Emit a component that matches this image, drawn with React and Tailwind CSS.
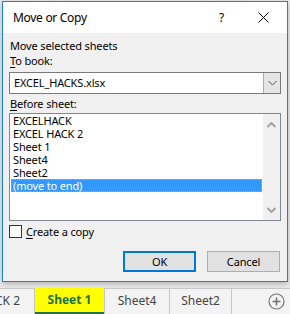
import React from "react";

function Chevron({ up, color = "#333", sw = 1 }) {
  return (
    <svg width="9" height="6" viewBox="0 0 9 6">
      {up ? (
        <polyline points="0.5,5 4.5,1 8.5,5" fill="none" stroke={color} strokeWidth={sw} />
      ) : (
        <polyline points="0.5,1 4.5,5 8.5,1" fill="none" stroke={color} strokeWidth={sw} />
      )}
    </svg>
  );
}

export default function App() {
  const items = ["EXCELHACK", "EXCEL HACK 2", "Sheet 1", "Sheet4", "Sheet2"];
  return (
    <div className="w-[290px] h-[314px] bg-[#ececec] overflow-hidden flex flex-col text-black font-['Noto_Sans','Open_Sans',sans-serif]">
      {/* Dialog */}
      <div className="ml-[2px] mt-[1px] w-[286px] h-[281px] border border-[#1883d7] bg-[#f0f0f0] flex flex-col text-[11px] tracking-[-0.15px] shadow-[0_2px_6px_rgba(0,0,0,0.25)]">
        <div className="h-[31px] bg-white flex items-center pl-[10px] pr-[18px] shrink-0">
          <span className="text-[12px] tracking-[-0.3px] leading-none">Move or Copy</span>
          <span className="ml-auto mr-[34px] text-[12px] leading-none">?</span>
          <svg width="11" height="11" viewBox="0 0 11 11">
            <line x1="0.5" y1="0.5" x2="10.5" y2="10.5" stroke="#000" strokeWidth="1" />
            <line x1="10.5" y1="0.5" x2="0.5" y2="10.5" stroke="#000" strokeWidth="1" />
          </svg>
        </div>
        <div className="flex flex-col pl-[6px] pr-[6px]">
          <div className="mt-[6px] h-[14px] leading-[14px] pl-[1px]">Move selected sheets</div>
          <div className="h-[15px] leading-[15px] pl-[1px]">
            <span className="underline underline-offset-2">T</span>o book:
          </div>
          <div className="mt-[4px] h-[22px] flex border border-[#7a7a7a] bg-white">
            <div className="flex-1 flex items-center pl-[4px]">EXCEL_HACKS.xlsx</div>
            <div className="w-[17px] bg-[#e5e5e5] border-l border-[#acacac] flex items-center justify-center">
              <Chevron color="#555" />
            </div>
          </div>
          <div className="mt-[3px] h-[14px] leading-[14px] pl-[1px]">
            <span className="underline underline-offset-2">B</span>efore sheet:
          </div>
          <div className="mt-[2px] h-[108px] flex border border-[#828790] bg-white">
            <div className="flex-1 flex flex-col px-[1px]">
              {items.map((t) => (
                <div key={t} className="h-[13px] leading-[12px] pl-[2px] pt-[1px]">
                  {t}
                </div>
              ))}
              <div className="h-[13px] leading-[11px] pl-[1px] bg-[#3399ff] text-white border border-dotted border-[#f0a040]">
                (move to end)
              </div>
            </div>
            <div className="w-[17px] bg-[#f0f0f0] flex flex-col items-center justify-between pt-[8px] pb-[7px]">
              <Chevron up color="#a3a3a3" sw={2} />
              <Chevron color="#a3a3a3" sw={2} />
            </div>
          </div>
          <div className="mt-[4px] h-[13px] flex items-center">
            <div className="w-[13px] h-[13px] border border-[#333] bg-white" />
            <span className="ml-[4px] leading-none">
              <span className="underline underline-offset-2">C</span>reate a copy
            </span>
          </div>
          <div className="mt-[13px] flex justify-end gap-[11px] pr-[1px]">
            <button className="w-[73px] h-[21px] border-2 border-[#0078d7] bg-[#e1e1e1] leading-none">
              OK
            </button>
            <button className="w-[73px] h-[21px] border border-[#adadad] bg-[#e1e1e1] leading-none">
              Cancel
            </button>
          </div>
        </div>
      </div>

      {/* Tab strip */}
      <div className="mt-[6px] h-[26px] flex border-t border-[#c6c6c6] bg-[#f3f3f3] text-[#444] text-[12px]">
        <div className="w-[35px] flex items-center justify-end pr-[14px] border-r border-[#c6c6c6] overflow-hidden whitespace-nowrap">
          <span className="pb-[2px]">CK 2</span>
        </div>
        <div className="w-[69px] -mt-px flex flex-col bg-[#ffff00]">
          <div className="flex-1 flex items-center justify-center font-bold text-[#217346] text-[12px]">
            Sheet 1
          </div>
          <div className="h-[2px] bg-[#217346]" />
        </div>
        <div className="w-[65px] flex items-center justify-center border-l border-[#c6c6c6]">
          <span className="pb-[2px]">Sheet4</span>
        </div>
        <div className="w-[63px] flex items-center justify-center border-l border-[#c6c6c6] border-r">
          <span className="pb-[2px]">Sheet2</span>
        </div>
        <div className="flex-1 flex items-center justify-end pr-[5px]">
          <svg width="17" height="17" viewBox="0 0 17 17">
            <circle cx="8.5" cy="8.5" r="7.5" fill="none" stroke="#777" strokeWidth="1.2" />
            <line x1="8.5" y1="4.5" x2="8.5" y2="12.5" stroke="#777" strokeWidth="1.6" />
            <line x1="4.5" y1="8.5" x2="12.5" y2="8.5" stroke="#777" strokeWidth="1.6" />
          </svg>
        </div>
      </div>
    </div>
  );
}
